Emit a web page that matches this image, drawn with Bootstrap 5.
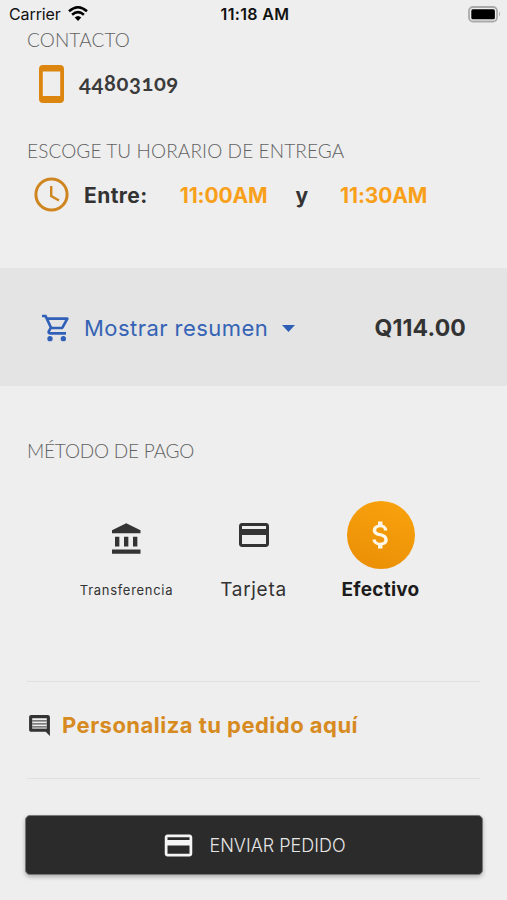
<!DOCTYPE html>
<html lang="es">
<head>
<meta charset="utf-8">
<meta name="viewport" content="width=device-width, initial-scale=1">
<title>Pedido</title>
<link rel="stylesheet" href="https://cdn.jsdelivr.net/npm/bootstrap@5.3.0/dist/css/bootstrap.min.css">
<style>
body{background:#eee;color:#333;font-family:Inter,"Open Sans",sans-serif;width:507px;height:900px;overflow:hidden;white-space:nowrap}
svg{display:block;flex:none}
.status{height:28px;padding:0 6px 0 9px;color:#111;font-size:16px;line-height:28px}
.status>*{flex:1}
.carrier{letter-spacing:-.1px}
.clock{font-weight:600;font-size:16px;letter-spacing:.35px}
.label{font-family:Lato,sans-serif;font-weight:300;font-size:19px;line-height:24px;height:24px;color:#626262;padding-left:27px}
.label-wide{letter-spacing:.12px}
.label-pay{margin-top:53px;letter-spacing:-.2px}
.phone-row{height:62px;padding-left:39px;margin-top:1px}
.phone-no{font-family:Lato,sans-serif;font-weight:700;font-size:22px;line-height:28px;font-variant-numeric:oldstyle-nums;letter-spacing:.6px;color:#3b3b3b;margin-left:15px;padding-bottom:2px}
.gap-a{margin-top:24px}
.time-row{height:62px;padding-left:34px;font-weight:700;font-size:21px}
.time-row span{padding-top:3px}
.from-word{margin-left:15px;letter-spacing:.45px}
.time{color:#f9a01b;letter-spacing:-.15px}
.time-from{margin-left:32px}
.and-word{margin-left:28px}
.time-to{margin-left:32px}
.summary{margin-top:43px;height:118px;background:#e4e4e4;padding:2px 41px 0 42px;color:#3563b5;font-size:22px}
.show-text{margin-left:14px;letter-spacing:.45px;padding-top:1px}
.caret-icon{margin-left:14px}
.total{color:#333;font-weight:700;font-size:23px;letter-spacing:.15px}
.methods{margin-top:38px;padding:0 63px;height:105px}
.method{width:127px}
.disc{width:68px;height:68px}
.disc.on{background:linear-gradient(200deg,#f9a30d,#ea8e06)}
.bank{margin:7px 0 0 1px}
.name{font-size:19px;line-height:28px;height:28px;margin-top:7px;letter-spacing:.7px}
.name.tiny-name{font-size:13px}
.name.chosen{font-weight:700;color:#1c1c1c;letter-spacing:.25px}
.custom{margin:75px 27px 0;height:98px;border-top:1px solid #e0e0e0;border-bottom:1px solid #e0e0e0;color:#d68a20;font-weight:700;font-size:22px;padding-bottom:10px}
.custom span{margin-left:10px;letter-spacing:.48px}
.send{margin:36px 24px 0 25px;width:458px;height:60px;background:#2b2b2b;border:1px solid #777;color:#e6e6e6;font-size:18px;font-weight:300;border-radius:5px;box-shadow:0 2px 4px #0004}
.send span{margin-left:14px}
.send:hover{background:#222;color:#fff}
</style>
</head>
<body>
<header class="status d-flex align-items-center">
  <div class="d-flex align-items-center"><span class="carrier">Carrier</span>
    <svg style="margin-left:7px" width="20" height="16" viewBox="0 0 20 16" fill="none" stroke="#000" stroke-width="2.5"><path d="M1 5.3Q10-2.7 19 5.3M4.1 8.8Q10 3.5 15.9 8.8"/><path d="M6.7 11.5Q10 8.4 13.3 11.5L10 15Z" fill="#000" stroke="none"/></svg></div>
  <div class="clock text-center">11:18 AM</div>
  <div class="d-flex justify-content-end"><svg width="33" height="17" viewBox="0 0 33 17"><rect x="1" y="1" width="28" height="14.5" rx="4" fill="#eee" stroke="#aaa" stroke-width="1.8"/><rect x="3.3" y="3.3" width="23.6" height="10" rx="1.6"/><path d="M31 5.5q2 2.5 0 5z" fill="#aaa"/></svg></div>
</header>
<main>
  <div class="label label-wide">CONTACTO</div>
  <div class="phone-row d-flex align-items-center">
    <svg width="25" height="38" viewBox="0 0 25 38"><path fill="#dc860f" fill-rule="evenodd" d="M4 0H21Q25 0 25 4V34Q25 38 21 38H4Q0 38 0 34V4Q0 0 4 0ZM3.8 6.5V31H21.2V6.5Z"/></svg>
    <span class="phone-no">44803109</span>
  </div>
  <div class="label label-wide gap-a">ESCOGE TU HORARIO DE ENTREGA</div>
  <div class="time-row d-flex align-items-center">
    <svg width="35" height="35" viewBox="0 0 35 35" fill="none" stroke="#cf8620"><circle cx="17.5" cy="17.5" r="15.6" stroke-width="3"/><path d="M17.2 9V19L25 23.5" stroke-width="2.4"/></svg>
    <span class="from-word">Entre:</span><span class="time time-from">11:00AM</span><span class="and-word">y</span><span class="time time-to">11:30AM</span>
  </div>
  <section class="summary d-flex align-items-center">
    <svg width="28" height="28" viewBox="1 2 21 20" fill="#3060b8"><path d="M15.550 13c.75 0 1.410-.41 1.750-1.030l3.580-6.490A.996.996 0 0 0 20.010 4H5.210l-.94-2H1v2h2l3.600 7.590-1.350 2.440C4.520 15.370 5.480 17 7 17h12v-2H7l1.100-2h7.450zM6.160 6h12.150l-2.760 5H8.530L6.160 6zM7 18a2 2 0 1 0 0 4 2 2 0 0 0 0-4zm10 0a2 2 0 1 0 0 4 2 2 0 0 0 0-4z"/></svg>
    <span class="show-text">Mostrar resumen</span>
    <svg class="caret-icon" width="13" height="7" viewBox="0 0 13 7"><path d="M0 0H13L6.500 7Z" fill="#2f5fb5"/></svg>
    <span class="total ms-auto">Q114.00</span>
  </section>
  <div class="label label-pay">MÉTODO DE PAGO</div>
  <div class="methods d-flex">
    <div class="method d-flex flex-column align-items-center"><div class="disc rounded-circle d-flex align-items-center justify-content-center">
      <svg class="bank" width="36" height="36" viewBox="0 0 24 24" fill="#333"><path d="M4 10.500v6.500h2.900v-6.500zm6 0v6.500h2.900v-6.500zM2 19v2.800h19V19zM16 10.500v6.500h2.900v-6.500zM11.500 1.500 2 6.200v2h19v-2z"/></svg></div>
      <div class="name tiny-name">Transferencia</div></div>
    <div class="method d-flex flex-column align-items-center"><div class="disc rounded-circle d-flex align-items-center justify-content-center">
      <svg width="36" height="36" viewBox="0 0 24 24" fill="#333"><path d="M20 4H4c-1.110 0-1.990.89-1.990 2L2 18c0 1.110.89 2 2 2h16c1.110 0 2-.89 2-2V6c0-1.110-.89-2-2-2zm0 14H4v-6h16v6zm0-10H4V6h16v2z"/></svg></div>
      <div class="name">Tarjeta</div></div>
    <div class="method d-flex flex-column align-items-center"><div class="disc on rounded-circle d-flex align-items-center justify-content-center">
      <svg width="36" height="36" viewBox="0 0 24 24" fill="#fff8e8"><path d="M11.800 10.900c-2.270-.59-3-1.200-3-2.150 0-1.090 1.010-1.850 2.700-1.850 1.780 0 2.440.85 2.500 2.100h2.210c-.07-1.720-1.120-3.300-3.210-3.810V3h-3v2.160c-1.940.42-3.500 1.680-3.500 3.610 0 2.310 1.910 3.460 4.700 4.130 2.500.6 3 1.480 3 2.410 0 .69-.49 1.790-2.700 1.790-2.060 0-2.870-.92-2.980-2.100h-2.200c.12 2.190 1.760 3.420 3.680 3.830V21h3v-2.150c1.950-.37 3.500-1.500 3.500-3.550 0-2.840-2.430-3.810-4.700-4.400z"/></svg></div>
      <div class="name chosen">Efectivo</div></div>
  </div>
  <div class="custom d-flex align-items-center">
    <svg width="25" height="25" viewBox="0 0 24 24"><path fill="#333" d="M22 4c0-1.100-.9-2-2-2H4c-1.100 0-2 .9-2 2v12c0 1.100.9 2 2 2h14l4 4z"/><path fill="#eee" d="M5 5H19V15H5z"/><path stroke="#555" stroke-width="1.200" d="M5 7.500H19M5 10.500H19M5 13.200H19"/></svg>
    <span>Personaliza tu pedido aquí</span>
  </div>
  <button class="send btn d-flex align-items-center justify-content-center">
    <svg width="33" height="33" viewBox="0 0 24 24" fill="#f5f5f5"><path d="M20 4H4c-1.110 0-1.990.89-1.990 2L2 18c0 1.110.89 2 2 2h16c1.110 0 2-.89 2-2V6c0-1.110-.89-2-2-2zm0 14H4v-6h16v6zm0-10H4V6h16v2z"/></svg>
    <span>ENVIAR PEDIDO</span>
  </button>
</main>
<script src="https://cdn.jsdelivr.net/npm/bootstrap@5.3.0/dist/js/bootstrap.bundle.min.js"></script>
</body>
</html>
